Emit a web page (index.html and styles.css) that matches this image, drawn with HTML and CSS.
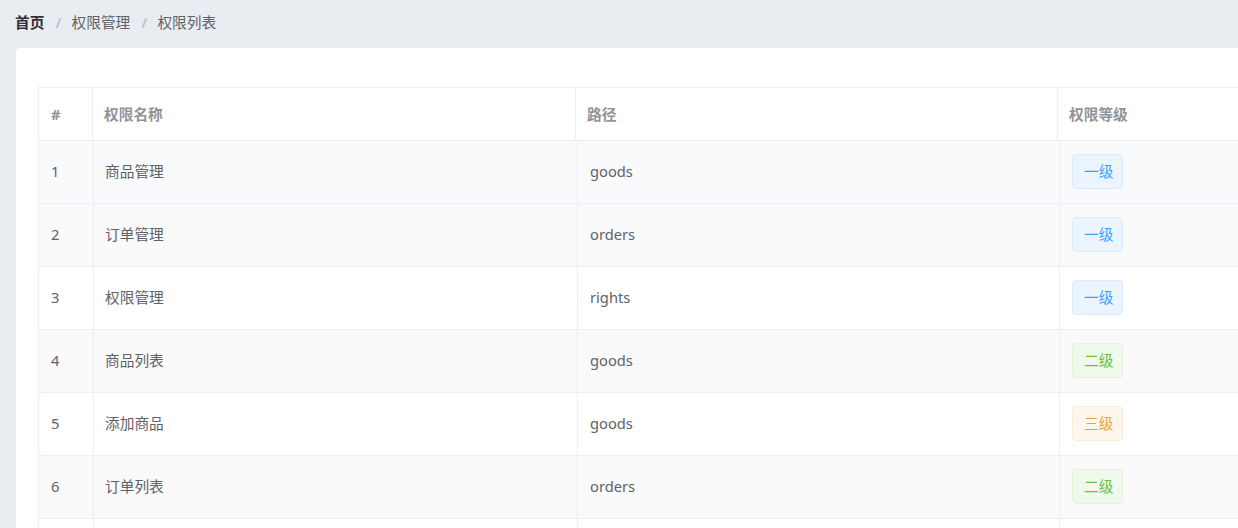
FILE: index.html
```html
<!DOCTYPE html>
<html lang="zh-CN">
<head>
<meta charset="utf-8">
<title>权限列表</title>
<link rel="stylesheet" href="styles.css">
</head>
<body>
<div class="page">
  <nav class="breadcrumb">
    <span class="crumb crumb-home">首页</span><span class="sep">/</span>
    <span class="crumb">权限管理</span><span class="sep">/</span>
    <span class="crumb">权限列表</span>
  </nav>
  <section class="card">
    <div class="table">
      <div class="row head">
        <div class="cell c1">#</div>
        <div class="cell c2">权限名称</div>
        <div class="cell c3">路径</div>
        <div class="cell c4">权限等级</div>
      </div>
      <div class="row body hover">
        <div class="cell b1">1</div>
        <div class="cell b2">商品管理</div>
        <div class="cell b3">goods</div>
        <div class="cell b4"><span class="tag primary">一级</span></div>
      </div>
      <div class="row body stripe">
        <div class="cell b1">2</div>
        <div class="cell b2">订单管理</div>
        <div class="cell b3">orders</div>
        <div class="cell b4"><span class="tag primary">一级</span></div>
      </div>
      <div class="row body">
        <div class="cell b1">3</div>
        <div class="cell b2">权限管理</div>
        <div class="cell b3">rights</div>
        <div class="cell b4"><span class="tag primary">一级</span></div>
      </div>
      <div class="row body stripe">
        <div class="cell b1">4</div>
        <div class="cell b2">商品列表</div>
        <div class="cell b3">goods</div>
        <div class="cell b4"><span class="tag success">二级</span></div>
      </div>
      <div class="row body">
        <div class="cell b1">5</div>
        <div class="cell b2">添加商品</div>
        <div class="cell b3">goods</div>
        <div class="cell b4"><span class="tag warning">三级</span></div>
      </div>
      <div class="row body stripe">
        <div class="cell b1">6</div>
        <div class="cell b2">订单列表</div>
        <div class="cell b3">orders</div>
        <div class="cell b4"><span class="tag success">二级</span></div>
      </div>
      <div class="row body">
        <div class="cell b1"></div>
        <div class="cell b2"></div>
        <div class="cell b3"></div>
        <div class="cell b4"></div>
      </div>
    </div>
  </section>
</div>
</body>
</html>
```
FILE: styles.css
```css
html, body {
  margin: 0;
  padding: 0;
  height: 100%;
  overflow: hidden;
}
body {
  background: #e9edf1;
  font-family: "Noto Sans", "Noto Sans CJK SC", sans-serif;
  font-size: 14.7px;
  color: #606266;
}
.page {
  padding: 15px 0 0 15px;
}
.breadcrumb {
  display: flex;
  align-items: center;
  height: 14px;
  line-height: 14px;
  font-size: 14.7px;
  white-space: nowrap;
}
.crumb { color: #606266; }
.crumb-home { color: #303133; font-weight: bold; }
.sep {
  color: #c0c4cc;
  font-weight: bold;
  margin: 0 10px 0 11px;
}
.card {
  margin: 19px 0 0 1px;
  width: 1300px;
  background: #fff;
  border-radius: 4px;
  padding: 39px 0 0 22px;
  box-sizing: border-box;
}
.table {
  width: 1280px;
  border-left: 1px solid #ebeef5;
  border-top: 1px solid #ebeef5;
}
.row {
  display: grid;
  border-bottom: 1px solid #ebeef5;
}
.row.head {
  grid-template-columns: 54px 483px 482px 1fr;
  height: 52px;
  color: #909399;
  font-weight: bold;
}
.row.body {
  grid-template-columns: 55px 484px 482px 1fr;
  height: 62px;
  background: #fff;
}
.row.body.stripe { background: #fafafa; }
.row.body.hover { background: #f9fafc; }
.cell {
  display: flex;
  align-items: center;
  box-sizing: border-box;
  border-right: 1px solid #ebeef5;
  padding-left: 11px;
  padding-bottom: 1px;
}
.row.body .cell { padding-bottom: 3px; }
.c1, .b1 { padding-left: 12px; }
.row.body .b3 { padding-left: 12px; }
.row.body .b4 { padding-left: 12px; padding-bottom: 2px; }
.tag {
  display: inline-flex;
  align-items: center;
  box-sizing: border-box;
  height: 35px;
  padding: 0 9px 1px 11px;
  border: 1px solid;
  border-radius: 4px;
  font-size: 14.7px;
  white-space: nowrap;
}
.tag.primary { background: #ecf5ff; border-color: #d9ecff; color: #409eff; }
.tag.success { background: #f0f9eb; border-color: #e1f3d8; color: #67c23a; }
.tag.warning { background: #fdf6ec; border-color: #faecd8; color: #e6a23c; }
```
